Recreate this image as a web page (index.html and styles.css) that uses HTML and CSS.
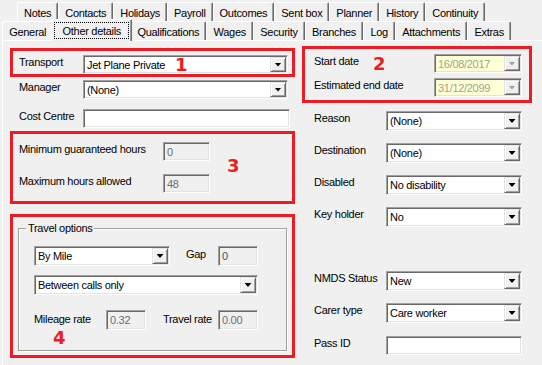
FILE: index.html
```html
<!DOCTYPE html>
<html lang="en">

<head>
    <meta charset="UTF-8">
    <meta name="viewport" content="width=device-width, initial-scale=1.0">
    <title>Other details</title>
    <link rel="stylesheet" href="styles.css">
</head>

<body>
    <div class="tabs">
        <div class="tab-row back">
            <div class="tab">Notes</div>
            <div class="tab">Contacts</div>
            <div class="tab">Holidays</div>
            <div class="tab">Payroll</div>
            <div class="tab">Outcomes</div>
            <div class="tab">Sent box</div>
            <div class="tab">Planner</div>
            <div class="tab">History</div>
            <div class="tab">Continuity</div>
        </div>
        <div class="tab-row front">
            <div class="tab">General</div>
            <div class="tab active"><span>Other details</span></div>
            <div class="tab">Qualifications</div>
            <div class="tab">Wages</div>
            <div class="tab">Security</div>
            <div class="tab">Branches</div>
            <div class="tab">Log</div>
            <div class="tab">Attachments</div>
            <div class="tab">Extras</div>
        </div>
    </div>

    <div class="page">
        <div class="col left">
            <div class="mark transport">
                <div class="row">
                    <div class="label">Transport</div>
                    <div class="combo wide"><span class="value">Jet Plane Private</span><span class="drop"></span></div>
                </div>
                <span class="num one">1</span>
            </div>

            <div class="row plain manager">
                <div class="label">Manager</div>
                <div class="combo wide"><span class="value">(None)</span><span class="drop"></span></div>
            </div>

            <div class="row plain cost">
                <div class="label">Cost Centre</div>
                <div class="field wider"></div>
            </div>

            <div class="mark hours">
                <div class="row">
                    <div class="label">Minimum guaranteed hours</div>
                    <div class="field off small">0</div>
                </div>
                <div class="row">
                    <div class="label">Maximum hours allowed</div>
                    <div class="field off small">48</div>
                </div>
                <span class="num three">3</span>
            </div>

            <div class="mark travel">
                <fieldset class="group">
                    <legend>Travel options</legend>
                    <div class="row">
                        <div class="combo mile"><span class="value">By Mile</span><span class="drop"></span></div>
                        <div class="label gap">Gap</div>
                        <div class="field off tiny dark">0</div>
                    </div>
                    <div class="row">
                        <div class="combo calls"><span class="value">Between calls only</span><span class="drop"></span></div>
                    </div>
                    <div class="row">
                        <div class="label rate">Mileage rate</div>
                        <div class="field off tiny">0.32</div>
                        <div class="label trate">Travel rate</div>
                        <div class="field off tiny">0.00</div>
                    </div>
                </fieldset>
                <span class="num four">4</span>
            </div>
        </div>

        <div class="col right">
            <div class="mark dates">
                <div class="row">
                    <div class="label">Start date</div>
                    <div class="combo date"><span class="value">16/08/2017</span><span class="drop"></span></div>
                </div>
                <div class="row">
                    <div class="label">Estimated end date</div>
                    <div class="combo date"><span class="value">31/12/2099</span><span class="drop"></span></div>
                </div>
                <span class="num two">2</span>
            </div>

            <div class="row plain first">
                <div class="label">Reason</div>
                <div class="combo"><span class="value">(None)</span><span class="drop"></span></div>
            </div>
            <div class="row plain">
                <div class="label">Destination</div>
                <div class="combo"><span class="value">(None)</span><span class="drop"></span></div>
            </div>
            <div class="row plain">
                <div class="label">Disabled</div>
                <div class="combo"><span class="value">No disability</span><span class="drop"></span></div>
            </div>
            <div class="row plain">
                <div class="label">Key holder</div>
                <div class="combo"><span class="value">No</span><span class="drop"></span></div>
            </div>
            <div class="row plain nmds">
                <div class="label">NMDS Status</div>
                <div class="combo"><span class="value">New</span><span class="drop"></span></div>
            </div>
            <div class="row plain">
                <div class="label">Carer type</div>
                <div class="combo"><span class="value">Care worker</span><span class="drop"></span></div>
            </div>
            <div class="row plain pass">
                <div class="label">Pass ID</div>
                <div class="field"></div>
            </div>
        </div>
    </div>
</body>

</html>
```

FILE: styles.css
```css
* {
    padding: 0;
    margin: 0;
    box-sizing: border-box;
}

body {
    width: 542px;
    height: 365px;
    overflow: hidden;
    background-color: #f0f0f0;
    font-family: "Liberation Sans", Arial, sans-serif;
    font-size: 11px;
    letter-spacing: -0.3px;
    color: #000;
}

/* tab strip */
.tabs {
    padding-top: 2px;
}

.tab-row {
    display: flex;
    height: 19px;
}

.tab-row.back {
    width: 485px;
    padding-left: 17px;
}

.tab-row.front {
    width: 511px;
    padding-left: 2px;
}

.tab {
    flex: 1 1 auto;
    height: 19px;
    padding: 2px 6px 0;
    line-height: 16px;
    text-align: center;
    white-space: nowrap;
    border-top: 1px solid #fff;
    border-left: 1px solid #fff;
    border-right: 1px solid #696969;
    border-radius: 2px 2px 0 0;
    box-shadow: inset -1px 0 0 #a0a0a0;
}

.tab.active {
    position: relative;
    z-index: 1;
    height: 22px;
    margin: -2px -2px 0;
    padding: 2px 2px 0;
    background-color: #f0f0f0;
}

.tab.active span {
    display: block;
    height: 17px;
    padding: 1px 7px 0;
    line-height: 15px;
    border: 1px dotted #000;
}

/* page */
.page {
    display: flex;
    align-items: flex-start;
    gap: 7px;
    height: 325px;
    margin-left: 2px;
    padding: 7px 0 0 7px;
    border-top: 1px solid #fff;
    border-left: 1px solid #fff;
}

.col.left {
    width: 285px;
}

.col.right {
    width: 230px;
    margin-top: -2px;
}

.row {
    display: flex;
    align-items: flex-start;
}

.label {
    flex: none;
    padding-top: 1px;
    line-height: 13px;
    white-space: nowrap;
}

/* red annotation boxes */
.mark {
    position: relative;
    border: 3px solid #ed1c24;
}

.num {
    position: absolute;
    color: #ed1c24;
    font: bold 18px/18px "DejaVu Sans", sans-serif;
    letter-spacing: 0;
}

/* controls */
.combo,
.field {
    flex: none;
    display: flex;
    height: 20px;
    background-color: #fff;
    border: 1px solid;
    border-color: #a0a0a0 #fff #fff #a0a0a0;
    box-shadow: inset 1px 1px 0 #696969, inset -1px -1px 0 #e3e3e3;
}

.field {
    height: 19px;
    padding: 2px 0 0 3px;
    line-height: 14px;
}

.field.off {
    background-color: #f0f0f0;
    color: #6d6d6d;
}

.field.dark {
    color: #505050;
}

.combo .value {
    flex: 1;
    padding: 2px 0 0 3px;
    line-height: 15px;
    white-space: nowrap;
    overflow: hidden;
}

.combo .drop {
    flex: none;
    width: 16px;
    margin: 1px;
    display: flex;
    align-items: center;
    justify-content: center;
    background-color: #f0f0f0;
    border: 1px solid;
    border-color: #e3e3e3 #696969 #696969 #e3e3e3;
    box-shadow: inset 1px 1px 0 #fff, inset -1px -1px 0 #a0a0a0;
}

.combo .drop::after {
    content: "";
    width: 7px;
    height: 4px;
    background-color: #000;
    clip-path: polygon(0 0, 100% 0, 50% 100%);
}

.combo.date {
    width: 88px;
    height: 19px;
    background-color: #ffffd6;
    color: #a3a38c;
}

.combo.date .drop::after {
    background-color: #a0a0a0;
}

/* left column */
.transport {
    height: 29px;
    padding: 4px 4px 0 6px;
}

.left .label {
    width: 64px;
}

.combo.wide {
    width: 205px;
    height: 19px;
}

.row.plain {
    padding-left: 9px;
}

.manager {
    margin-top: 3px;
}

.cost {
    margin-top: 10px;
}

.field.wider {
    width: 207px;
}

.hours {
    margin-top: 3px;
    height: 73px;
    padding: 8px 0 0 6px;
}

.hours .row + .row {
    margin-top: 13px;
}

.hours .label {
    width: 144px;
}

.field.small {
    width: 47px;
}

.travel {
    margin-top: 10px;
    height: 144px;
    padding: 5px 5px 0;
}

.group {
    height: 129px;
    padding: 11px 15px 0;
    border: 1px solid #a0a0a0;
    box-shadow: inset 1px 1px 0 #fff, 1px 1px 0 #fff;
}

.group legend {
    margin-left: -8px;
    padding: 0 2px;
    line-height: 13px;
    background-color: #f0f0f0;
}

.combo.mile {
    width: 136px;
}

.travel .label.gap {
    width: 32px;
    margin-left: 16px;
    padding-top: 2px;
}

.field.tiny {
    width: 40px;
    height: 20px;
}

.combo.calls {
    width: 224px;
    margin-top: 9px;
}

.travel .row:last-child {
    margin-top: 15px;
}

.travel .label.rate {
    width: 72px;
    padding-top: 3px;
}

.travel .label.trate {
    width: 55px;
    margin-left: 17px;
    padding-top: 3px;
}

.num.one {
    left: 162px;
    top: 5px;
}

.num.three {
    left: 214px;
    top: 23px;
}

.num.four {
    left: 40px;
    top: 112px;
}

/* right column */
.dates {
    height: 57px;
    padding: 5px 7px 0 9px;
}

.dates .label {
    width: 120px;
}

.dates .row + .row {
    margin-top: 5px;
}

.num.two {
    left: 68px;
    top: 6px;
}

.right .row.plain {
    padding-left: 12px;
    margin-top: 12px;
}

.right .row.plain.first {
    margin-top: 8px;
}

.right .row.plain.nmds {
    margin-top: 44px;
}

.right .row.plain.pass {
    margin-top: 13px;
}

.right .plain .label {
    width: 72px;
}

.right .plain .combo,
.right .plain .field {
    width: 136px;
}
```
